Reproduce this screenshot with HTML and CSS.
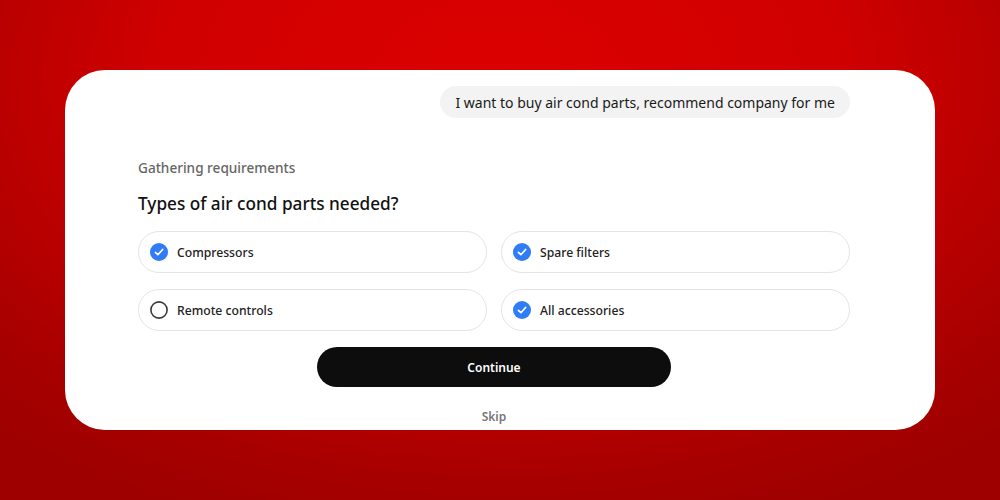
FILE: index.html
```html
<!DOCTYPE html>
<html>
<head>
<meta charset="utf-8">
<link rel="stylesheet" href="styles.css">
</head>
<body>
<div class="stage">
  <div class="card">
    <div class="bubble-row">
      <div class="bubble">I want to buy air cond parts, recommend company for me</div>
    </div>
    <div class="status">Gathering requirements</div>
    <h2 class="question">Types of air cond parts needed?</h2>
    <div class="options">
      <div class="option">
        <svg class="check" viewBox="0 0 18 18"><circle cx="9" cy="9" r="9" fill="#2f7cf6"/><path d="M5.4 9.3 L7.9 11.7 L12.6 6.5" fill="none" stroke="#fff" stroke-width="1.7" stroke-linecap="round" stroke-linejoin="round"/></svg>
        <span>Compressors</span>
      </div>
      <div class="option">
        <svg class="check" viewBox="0 0 18 18"><circle cx="9" cy="9" r="9" fill="#2f7cf6"/><path d="M5.4 9.3 L7.9 11.7 L12.6 6.5" fill="none" stroke="#fff" stroke-width="1.7" stroke-linecap="round" stroke-linejoin="round"/></svg>
        <span>Spare filters</span>
      </div>
      <div class="option">
        <svg class="check" viewBox="0 0 18 18"><circle cx="9" cy="9" r="8.1" fill="none" stroke="#3a3a3a" stroke-width="1.6"/></svg>
        <span>Remote controls</span>
      </div>
      <div class="option">
        <svg class="check" viewBox="0 0 18 18"><circle cx="9" cy="9" r="9" fill="#2f7cf6"/><path d="M5.4 9.3 L7.9 11.7 L12.6 6.5" fill="none" stroke="#fff" stroke-width="1.7" stroke-linecap="round" stroke-linejoin="round"/></svg>
        <span>All accessories</span>
      </div>
    </div>
    <div class="actions">
      <button class="continue">Continue</button>
      <div class="skip">Skip</div>
    </div>
  </div>
</div>
</body>
</html>
```

FILE: styles.css
```css
* { box-sizing: border-box; }
html, body { margin: 0; padding: 0; }
body {
  width: 1000px;
  height: 500px;
  overflow: hidden;
  font-family: "Noto Sans", "Open Sans", "Liberation Sans", sans-serif;
  background: radial-gradient(ellipse 75% 95% at 50% 15%, #dc0000 0%, #d00000 45%, #a80000 85%, #9e0000 100%);
}
.stage {
  padding-top: 70px;
  padding-left: 65px;
}
.card {
  width: 870px;
  height: 360px;
  background: #fff;
  border-radius: 40px;
  padding: 16px 85px 0 73px;
  display: flex;
  flex-direction: column;
}
.bubble-row {
  display: flex;
  justify-content: flex-end;
}
.bubble {
  height: 32px;
  line-height: 33px;
  padding: 0 15px;
  background: #f3f3f3;
  border-radius: 16px;
  font-size: 14px;
  color: #1a1a1a;
}
.status {
  margin-top: 40px;
  font-size: 13.6px;
  line-height: 20px;
  color: #666;
  font-weight: 500;
}
.question {
  margin: 14px 0 0 0;
  font-size: 17.2px;
  line-height: 24px;
  font-weight: 500;
  color: #111;
}
.options {
  margin-top: 15px;
  display: grid;
  grid-template-columns: 349px 349px;
  column-gap: 14px;
  row-gap: 16px;
}
.option {
  height: 42px;
  border: 1px solid #e4e4e4;
  border-radius: 21px;
  display: flex;
  align-items: center;
  padding-left: 11px;
  gap: 9px;
  font-size: 12.2px;
  font-weight: 500;
  color: #222;
}
.check { width: 18px; height: 18px; flex: none; }
.actions {
  display: flex;
  flex-direction: column;
  align-items: center;
  margin-top: 16px;
}
.continue {
  width: 354px;
  height: 40px;
  border: none;
  border-radius: 20px;
  background: #0d0d0d;
  color: #fff;
  font-family: inherit;
  font-size: 12px;
  font-weight: 600;
}
.skip {
  margin-top: 20px;
  font-size: 12px;
  line-height: 20px;
  font-weight: 600;
  color: #777;
}
```
